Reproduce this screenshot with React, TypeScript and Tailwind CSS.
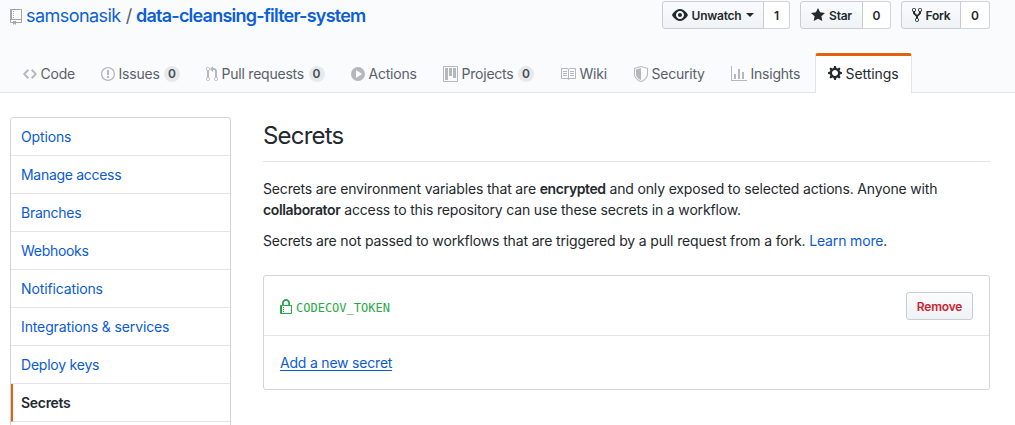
import type { ReactNode } from "react";

type IconProps = { d: string; w: number; className?: string };

function Icon({ d, w, className = "" }: IconProps) {
  return (
    <svg
      viewBox={`0 0 ${w} 16`}
      width={w}
      height={16}
      fill="currentColor"
      fillRule="evenodd"
      className={`shrink-0 ${className}`}
      aria-hidden="true"
    >
      <path d={d} />
    </svg>
  );
}

const icons = {
  repo: "M4 9H3V8h1v1zm0-3H3v1h1V6zm0-2H3v1h1V4zm0-2H3v1h1V2zm8-1v12c0 .55-.45 1-1 1H6v2l-1.5-1.5L3 16v-2H1c-.55 0-1-.45-1-1V1c0-.55.45-1 1-1h10c.55 0 1 .45 1 1zm-1 10H1v2h2v-1h3v1h5v-2zm0-10H2v9h9V1z",
  eye: "M8.06 2C3 2 0 8 0 8s3 6 8.06 6C13 14 16 8 16 8s-3-6-7.94-6zM8 12c-2.2 0-4-1.78-4-4 0-2.2 1.8-4 4-4 2.22 0 4 1.8 4 4 0 2.22-1.78 4-4 4zm2-4c0 1.11-.89 2-2 2-1.11 0-2-.89-2-2 0-1.11.89-2 2-2 1.11 0 2 .89 2 2z",
  star: "M14 6l-4.9-.64L7 1 4.9 5.36 0 6l3.6 3.26L2.67 14 7 11.67 11.33 14l-.93-4.74L14 6z",
  fork: "M8 1a1.993 1.993 0 00-1 3.72V6L5 8 3 6V4.72A1.993 1.993 0 002 1a1.993 1.993 0 00-1 3.72V6.5l3 3v1.78A1.993 1.993 0 005 15a1.993 1.993 0 001-3.72V9.5l3-3V4.72A1.993 1.993 0 008 1zM2 4.2C1.34 4.2.8 3.65.8 3c0-.65.55-1.2 1.2-1.2.65 0 1.2.55 1.2 1.2 0 .65-.55 1.2-1.2 1.2zm3 10c-.66 0-1.2-.55-1.2-1.2 0-.65.55-1.2 1.2-1.2.65 0 1.2.55 1.2 1.2 0 .65-.55 1.2-1.2 1.2zm3-10c-.66 0-1.2-.55-1.2-1.2 0-.65.55-1.2 1.2-1.2.65 0 1.2.55 1.2 1.2 0 .65-.55 1.2-1.2 1.2z",
  code: "M9.5 3L8 4.5 11.5 8 8 11.5 9.5 13 14 8 9.5 3zm-5 0L0 8l4.5 5L6 11.5 2.5 8 6 4.5 4.5 3z",
  issue: "M7 2.3c3.14 0 5.7 2.56 5.7 5.7s-2.56 5.7-5.7 5.7A5.71 5.71 0 011.3 8c0-3.14 2.56-5.7 5.7-5.7zM7 1C3.14 1 0 4.14 0 8s3.14 7 7 7 7-3.14 7-7-3.14-7-7-7zm1 3H6v5h2V4zm0 6H6v2h2v-2z",
  pull: "M11 11.28V5c-.03-.78-.34-1.47-.94-2.06C9.46 2.35 8.78 2.03 8 2H7V0L4 3l3 3V4h1c.27.02.48.11.69.31.21.2.3.42.31.69v6.28A1.993 1.993 0 0010 15a1.993 1.993 0 001-3.72zm-1 2.92c-.66 0-1.2-.55-1.2-1.2 0-.65.55-1.2 1.2-1.2.65 0 1.2.55 1.2 1.2 0 .65-.55 1.2-1.2 1.2zM4 3c0-1.11-.89-2-2-2a1.993 1.993 0 00-1 3.72v6.56A1.993 1.993 0 002 15a1.993 1.993 0 001-3.72V4.72c.59-.34 1-.98 1-1.72zm-.8 10c0 .66-.55 1.2-1.2 1.2-.65 0-1.2-.55-1.2-1.2 0-.65.55-1.2 1.2-1.2.65 0 1.2.55 1.2 1.2zM2 4.2C1.34 4.2.8 3.65.8 3c0-.65.55-1.2 1.2-1.2.65 0 1.2.55 1.2 1.2 0 .65-.55 1.2-1.2 1.2z",
  play: "M14 8A7 7 0 110 8a7 7 0 0114 0zm-8.223 3.482l4.599-3.066a.5.5 0 000-.832L5.777 4.518A.5.5 0 005 4.934v6.132a.5.5 0 00.777.416z",
  project: "M10 12h3V2h-3v10zm-4-2h3V2H6v8zm-4 4h3V2H2v12zm-1 1h13V1H1v14zM14 0H1a1 1 0 00-1 1v14a1 1 0 001 1h13a1 1 0 001-1V1a1 1 0 00-1-1z",
  book: "M3 5h4v1H3V5zm0 3h4V7H3v1zm0 2h4V9H3v1zm11-5h-4v1h4V5zm0 2h-4v1h4V7zm0 2h-4v1h4V9zm2-6v9c0 .55-.45 1-1 1H9.5l-1 1-1-1H2c-.55 0-1-.45-1-1V3c0-.55.45-1 1-1h5.5l1 1 1-1H15c.55 0 1 .45 1 1zm-8 .5L7.5 3H2v9h6V3.5zm7-.5H9.5l-.5.5V12h6V3z",
  shield: "M0 2l7-2 7 2v6.02C14 12.69 8.69 16 7 16c-1.69 0-7-3.31-7-7.98V2zm1 .75L7 1l6 1.75v5.268C13 12.104 8.449 15 7 15c-1.449 0-6-2.896-6-6.982V2.75zm1 .75L7 2v12c-1.207 0-5-2.482-5-5.985V3.5z",
  graph: "M16 14v1H0V0h1v14h15zM5 13H3V8h2v5zm4 0H7V3h2v10zm4 0h-2V6h2v7z",
  gear: "M14 8.77v-1.6l-1.94-.64-.45-1.09.88-1.84-1.13-1.13-1.81.91-1.09-.45-.69-1.92h-1.6l-.63 1.94-1.11.45-1.84-.88-1.13 1.13.91 1.81-.45 1.09L0 7.23v1.59l1.94.64.45 1.09-.88 1.84 1.13 1.13 1.81-.91 1.09.45.69 1.92h1.59l.63-1.94 1.11-.45 1.84.88 1.13-1.13-.92-1.81.47-1.09L14 8.75v.02zM7 11c-1.66 0-3-1.34-3-3s1.34-3 3-3 3 1.34 3 3-1.34 3-3 3z",
  lock: "M4 13H3v-1h1v1zm8-6v7c0 .55-.45 1-1 1H1c-.55 0-1-.45-1-1V7c0-.55.45-1 1-1h1V4c0-2.2 1.8-4 4-4s4 1.8 4 4v2h1c.55 0 1 .45 1 1zM3.8 6h4.41V4c0-1.22-.98-2.2-2.2-2.2-1.22 0-2.2.98-2.2 2.2v2H3.8zM11 7H2v7h9V7zM4 8H3v1h1V8zm0 2H3v1h1v-1z",
};

const tabs = [
  { label: "Code", icon: icons.code, w: 14, width: "w-[78px]" },
  { label: "Issues", icon: icons.issue, w: 14, width: "w-[105px]", count: 0 },
  { label: "Pull requests", icon: icons.pull, w: 12, width: "w-[145px]", count: 0 },
  { label: "Actions", icon: icons.play, w: 14, width: "w-[92px]" },
  { label: "Projects", icon: icons.project, w: 15, width: "w-[117px]", count: 0 },
  { label: "Wiki", icon: icons.book, w: 16, width: "w-[74px]" },
  { label: "Security", icon: icons.shield, w: 14, width: "w-[97px]" },
  { label: "Insights", icon: icons.graph, w: 16, width: "w-[84px]" },
];

const menu = [
  { label: "Options", tracking: "tracking-[-0.15px]" },
  { label: "Manage access", tracking: "tracking-[-0.3px]" },
  { label: "Branches", tracking: "tracking-[-0.25px]" },
  { label: "Webhooks", tracking: "tracking-[-0.3px]" },
  { label: "Notifications", tracking: "tracking-[-0.13px]" },
  { label: "Integrations & services", tracking: "tracking-[-0.12px]" },
  { label: "Deploy keys", tracking: "tracking-[-0.22px]" },
  { label: "Secrets", tracking: "tracking-[-0.3px]", current: true },
];

function SocialButton({ children, count, main, side }: { children: ReactNode; count: number; main: string; side: string }) {
  return (
    <div className="flex h-7 text-[12px] font-semibold text-[#24292e]">
      <button
        className={`${main} flex items-center justify-center rounded-l-[3px] border border-[#c9cdd1] bg-linear-to-b from-[#fafbfc] to-[#eff3f6] tracking-[-0.25px]`}
      >
        {children}
      </button>
      <span className={`${side} flex items-center justify-center rounded-r-[3px] border border-l-0 border-[#d1d3d6] bg-white`}>
        {count}
      </span>
    </div>
  );
}

export default function App() {
  return (
    <div className="flex h-[425px] w-[1015px] flex-col overflow-hidden bg-white font-['Inter',sans-serif] text-[14px] leading-[21px] whitespace-nowrap text-[#24292e]">
      <header className="flex h-[93px] shrink-0 flex-col justify-between border-b border-[#e1e4e8] bg-[#fafbfc]">
        <div className="flex items-start justify-between pt-px pr-[25px] pl-[10px]">
          <h1 className="flex items-center pt-[2px] text-[18px] leading-[26px] tracking-[-0.55px] text-[#0b5fd8]">
            <Icon d={icons.repo} w={12} className="mt-[2px] mr-1 text-[#a3a6aa]" />
            <a>samsonasik</a>
            <span className="mr-[4.5px] ml-[5px] text-[#586069]">/</span>
            <a className="font-semibold tracking-[-0.78px]">data-cleansing-filter-system</a>
          </h1>
          <div className="flex gap-[10px]">
            <SocialButton count={1} main="w-[102px]" side="w-[26px]">
              <Icon d={icons.eye} w={16} className="mr-1" />
              Unwatch
              <span className="ml-[5px] border-x-4 border-t-4 border-x-transparent border-t-[#24292e]" />
            </SocialButton>
            <SocialButton count={0} main="w-[63px]" side="w-[28px]">
              <Icon d={icons.star} w={14} className="mr-1" />
              Star
            </SocialButton>
            <SocialButton count={0} main="w-[60px]" side="w-[29px]">
              <Icon d={icons.fork} w={10} className="mr-1" />
              Fork
            </SocialButton>
          </div>
        </div>
        <nav className="-mb-px flex h-10 pl-[23px] tracking-[-0.22px] text-[#586069]">
          {tabs.map((t) => (
            <a key={t.label} className={`${t.width} flex items-center pt-px`}>
              <Icon d={t.icon} w={t.w} className="mr-[3.5px] text-[#b5b8bb]" />
              {t.label}
              {t.count !== undefined && (
                <span className="ml-[4.5px] flex h-4 w-4 items-center justify-center rounded-full bg-[#e7e9eb] text-[12px] font-semibold tracking-normal text-[#444d56]">
                  {t.count}
                </span>
              )}
            </a>
          ))}
          <a className="flex w-[97px] items-center rounded-t-[3px] border-x border-t-[3px] border-x-[#e1e4e8] border-t-[#e36209] bg-white pb-[3px] pl-3 tracking-[-0.08px] text-[#24292e]">
            <Icon d={icons.gear} w={14} className="mr-[3.5px]" />
            Settings
          </a>
        </nav>
      </header>

      <div className="flex items-start gap-8 pl-[10px]">
        <aside className="mt-6 w-[221px] shrink-0 rounded-[3px] border border-[#d1d5da]">
          {menu.map((m) =>
            m.current ? (
              <a
                key={m.label}
                className={`${m.tracking} flex h-[38px] items-center border-b border-l-2 border-b-[#e1e4e8] border-l-[#e36209] pl-2 font-semibold`}
              >
                {m.label}
              </a>
            ) : (
              <a key={m.label} className={`${m.tracking} flex h-[38px] items-center border-b border-[#e1e4e8] pl-[10px] text-[#0b5bd3]`}>
                {m.label}
              </a>
            ),
          )}
          <div className="h-[38px]" />
        </aside>

        <main className="w-[727px] pt-6">
          <h2 className="h-[45px] border-b border-[#e1e4e8] pt-px text-[24px] leading-[36px] tracking-[-0.8px]">Secrets</h2>
          <p className="mt-4 tracking-[-0.16px]">
            Secrets are environment variables that are <strong className="font-semibold tracking-[-0.4px]">encrypted</strong> and only exposed to selected actions. Anyone with
            <br />
            <strong className="font-semibold tracking-[-0.35px]">collaborator</strong> access to this repository can use these secrets in a workflow.
          </p>
          <p className="mt-[10px] tracking-[-0.145px]">
            Secrets are not passed to workflows that are triggered by a pull request from a fork.{" "}
            <a className="text-[#0b5bd3]">Learn more</a>.
          </p>
          <section className="mt-6 rounded-[3px] border border-[#d1d5da]">
            <div className="flex h-[60px] items-center justify-between border-b border-[#e1e4e8] px-4 text-[#28a745]">
              <div className="flex items-center gap-1 pt-[2px]">
                <Icon d={icons.lock} w={12} />
                <code className="pt-1 font-['DejaVu_Sans_Mono',monospace] text-[12px]">CODECOV_TOKEN</code>
              </div>
              <button className="h-7 w-[67px] rounded-[3px] border border-[#c9cdd1] bg-linear-to-b from-[#fafbfc] to-[#eff3f6] pt-px text-[12px] font-semibold tracking-[-0.18px] text-[#cb2431]">
                Remove
              </button>
            </div>
            <div className="flex h-[53px] items-center px-4 pt-px">
              <a className="h-4 border-b border-[#0b5bd3] leading-[16px] tracking-[-0.2px] text-[#0b5bd3]">Add a new secret</a>
            </div>
          </section>
        </main>
      </div>
    </div>
  );
}
